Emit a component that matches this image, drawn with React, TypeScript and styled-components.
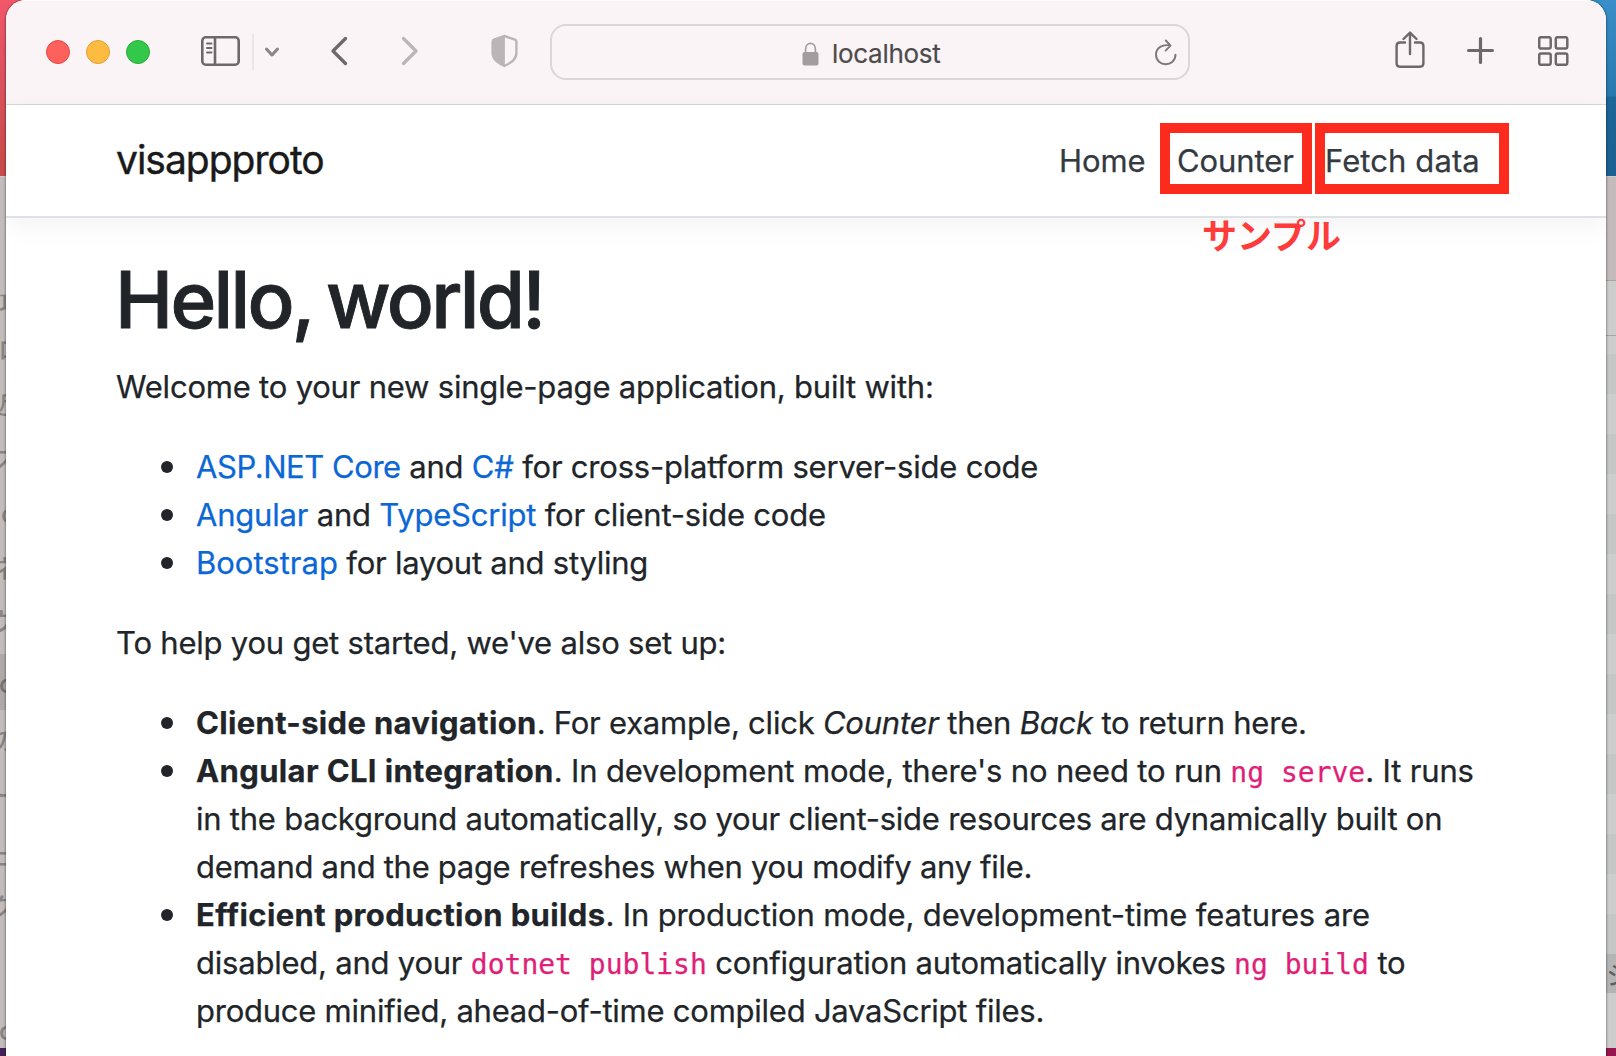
import React from 'react';
import styled, { createGlobalStyle, css } from 'styled-components';

const sans = `Inter, "Noto Sans CJK JP", sans-serif`;

const GlobalStyle = createGlobalStyle`
  *, *::before, *::after { box-sizing: border-box; }
  html, body { margin: 0; padding: 0; }
  body { font-family: ${sans}; color: #212529; overflow: hidden; }
`;

const Desktop = styled.div`
  position: relative;
  width: 1616px;
  height: 1056px;
  overflow: hidden;
  padding: 0 10px 0 6px;
`;

const Backdrop = styled.div`
  position: absolute;
  inset: 0;
  display: flex;
  justify-content: space-between;
`;

const Wallpaper = styled.div<{ $bg: string }>`
  width: 40px;
  height: 1056px;
  padding: 176px 0 8px;
  background: ${p => p.$bg};
`;

const Pane = styled.div`
  height: 872px;
  overflow: hidden;
  display: flex;
  flex-direction: column;
  background: #c2bcbb;
  border-top: 1px solid #d0cac9;
`;

const SideItem = styled.div<{ $h: number; $on?: boolean; $x?: number }>`
  flex: none;
  height: ${p => p.$h}px;
  display: flex;
  align-items: center;
  padding-left: 1px;
  text-indent: ${p => p.$x ?? -1}px;
  font: 500 25px/1 "Noto Sans CJK JP", sans-serif;
  color: ${p => (p.$on ? '#797374' : '#898384')};
  background: ${p => (p.$on ? '#b0a9a9' : 'transparent')};
`;

const Band = styled.div<{ $h: number; $bg: string; $line?: boolean }>`
  flex: none;
  height: ${p => p.$h}px;
  background: ${p => p.$bg};
  ${p => p.$line && css`border-bottom: 1px solid #a5a2a2;`}
  display: flex;
  align-items: center;
  padding-left: 30px;
  font: 400 26px/1 "Noto Sans CJK JP", sans-serif;
  color: #5e5e5e;
`;

const Window = styled.div`
  position: relative;
  width: 1600px;
  height: 1056px;
  overflow: hidden;
  display: flex;
  flex-direction: column;
  background: #fff;
  border-radius: 20px 20px 0 0;
`;

const WindowShade = styled.div`
  position: relative;
  border-radius: 20px 20px 0 0;
  box-shadow: 0 0 2px 1px rgba(0, 0, 0, 0.3);
`;

const Toolbar = styled.header`
  flex: none;
  height: 105px;
  display: flex;
  align-items: flex-start;
  background: #faf4f6;
  border-top: 1px solid #fdfbfc;
  border-bottom: 1px solid #dad6d8;
`;

const Lights = styled.div`
  display: flex;
  gap: 16px;
  margin: 39px 0 0 40px;
`;

const Light = styled.span<{ $fill: string; $edge: string }>`
  width: 24px;
  height: 24px;
  border-radius: 50%;
  background: ${p => p.$fill};
  border: 1px solid ${p => p.$edge};
`;

const Glyph = styled.svg<{ $ml?: number; $mt: number }>`
  flex: none;
  display: block;
  margin: ${p => p.$mt - 1}px 0 0 ${p => p.$ml ?? 0}px;
  fill: none;
  stroke: #6f686a;
  stroke-linecap: round;
  stroke-linejoin: round;
`;

const Divider = styled.span`
  width: 2px;
  height: 36px;
  margin: 33px 0 0 12px;
  background: #ebe5e7;
`;

const AddressBar = styled.div`
  width: 640px;
  height: 56px;
  margin: 23px 0 0 31px;
  border: 2px solid #dcd6d8;
  border-radius: 16px;
  display: flex;
  align-items: flex-start;
`;

const Host = styled.span`
  width: 110px;
  margin: 10px 0 0 13px;
  font-size: 26px;
  line-height: 36px;
  letter-spacing: -0.3px;
  color: #4d4a4b;
  -webkit-text-stroke: 0.2px currentColor;
  white-space: nowrap;
`;

const NavBar = styled.nav`
  position: relative;
  flex: none;
  height: 113px;
  display: flex;
  justify-content: space-between;
  padding: 18px 97px 0 110px;
  border-bottom: 2px solid #dee2e6;
  box-shadow: 0 8px 24px rgba(0, 0, 0, 0.05);
`;

const Brand = styled.a`
  margin-top: 7px;
  font-size: 39px;
  line-height: 60px;
  letter-spacing: -1px;
  color: #1a1a1a;
  -webkit-text-stroke: 0.4px currentColor;
`;

const NavLinks = styled.div`
  display: flex;
  gap: 3px;
`;

const NavLink = styled.a<{ $w: number; $pad: number; $boxed?: boolean; $ls?: number }>`
  width: ${p => p.$w}px;
  height: 71px;
  padding: 0 0 0 ${p => p.$pad}px;
  border: 10px solid ${p => (p.$boxed ? '#fc2b1d' : 'transparent')};
  font-size: 31px;
  line-height: 56px;
  letter-spacing: ${p => p.$ls ?? -0.1}px;
  color: #343a40;
  -webkit-text-stroke: 0.25px currentColor;
  white-space: nowrap;
`;

const Note = styled.span`
  position: absolute;
  left: 1196px;
  top: 109px;
  font: 700 35px/40px "Noto Sans CJK JP", sans-serif;
  color: #ff3b3b;
`;

const Content = styled.main`
  padding: 34px 100px 0 110px;
  -webkit-text-stroke: 0.25px currentColor;
`;

const Title = styled.h1`
  margin: 0 0 15px -1px;
  font-size: 78px;
  font-weight: 500;
  line-height: 96px;
  letter-spacing: -2.7px;
  word-spacing: -4px;
  -webkit-text-stroke: 0.9px currentColor;
`;

const Para = styled.p`
  margin: 0 0 32px;
  font-size: 31px;
  line-height: 48px;
  letter-spacing: -0.21px;
  white-space: nowrap;
`;

const List = styled.ul`
  margin: 0 0 32px;
  padding: 0 0 0 80px;
  list-style: none;
  font-size: 31px;
  line-height: 48px;
`;

const Item = styled.li`
  position: relative;
  &::before {
    content: '';
    position: absolute;
    left: -35px;
    top: 18px;
    width: 12px;
    height: 12px;
    border-radius: 50%;
    background: #212529;
  }
`;

const Line = styled.span<{ $ls?: number }>`
  display: block;
  white-space: nowrap;
  letter-spacing: ${p => p.$ls ?? -0.22}px;
`;

const Link = styled.a<{ $ls?: number }>`
  letter-spacing: ${p => p.$ls ?? -0.2}px;
  color: #0c67d6;
`;

const Code = styled.code`
  font: 28px/1 "DejaVu Sans Mono", monospace;
  letter-spacing: 0;
  color: #e01f78;
`;

const Strong = styled.strong<{ $ls?: number }>`
  font-weight: 700;
  letter-spacing: ${p => p.$ls ?? 0.37}px;
`;

const sidebar = [
  { t: '', h: 97 }, { t: '項', h: 56, x: -2 }, { t: 'ロ', h: 36, x: -3 }, { t: '近', h: 74, x: -9 },
  { t: 'ス', h: 36, x: -9 }, { t: 'o', h: 72, x: 0 }, { t: 'ネ', h: 38, x: -9 },
  { t: 'ウ', h: 68, x: -12 }, { t: 'o', h: 56, on: true, x: -2 }, { t: 'の', h: 58, x: -9 },
  { t: 'ー', h: 52, x: -4 }, { t: 'ュ', h: 68, x: -8 }, { t: 'ク', h: 34, x: -11 },
  { t: '', h: 92 }, { t: 'o', h: 30, x: -2 },
];

export default function App() {
  return (
    <>
      <GlobalStyle />
      <Desktop>
        <Backdrop>
          <Wallpaper $bg="linear-gradient(#f2576a 0, #df5360 60px, #c64b4a 176px, #46205a 176px)">
            <Pane>
              {sidebar.map((s, i) => (
                <SideItem key={i} $h={s.h} $on={s.on} $x={s.x}>{s.t}</SideItem>
              ))}
            </Pane>
          </Wallpaper>
          <Wallpaper $bg="linear-gradient(#3a8fc8 0, #2878ad 96px, #1d6698 97px, #1b6090 176px, #96174f 176px)">
            <Pane>
              <Band $h={104} $bg="#c3babb" $line />
              <Band $h={55} $bg="#cdcccc" $line />
              <Band $h={18} $bg="#cdcccc" />
              {Array.from({ length: 15 }, (_, i) => (
                <Band key={i} $h={40} $bg={i % 2 ? '#cecdcd' : '#c4c7c6'} />
              ))}
              <Band $h={39} $bg="#b5b4b4">シ</Band>
              <Band $h={56} $bg="#cecdcd" />
            </Pane>
          </Wallpaper>
        </Backdrop>

        <WindowShade>
          <Window>
            <Toolbar>
              <Lights>
                <Light $fill="#fe605c" $edge="#e24b48" />
                <Light $fill="#fdbc40" $edge="#e0a137" />
                <Light $fill="#34c84a" $edge="#2aab3b" />
              </Lights>
              <Glyph $ml={51} $mt={36} width="39" height="30" strokeWidth="2.6">
                <rect x="1.3" y="1.3" width="36.400" height="27.400" rx="3.500" />
                <path d="M14 1.500v27" />
                <path d="M6 7.500h4.500M6 12h4.500M6 16.500h4.500" strokeWidth="1.900" />
              </Glyph>
              <Divider />
              <Glyph $ml={10} $mt={46} width="16" height="12" strokeWidth="3">
                <path d="M2.500 3l5.500 6 5.500-6" stroke="#8b8487" />
              </Glyph>
              <Glyph $ml={50} $mt={36} width="18" height="30" strokeWidth="3.300">
                <path d="M15.500 2.500L3 15l12.500 12.500" />
              </Glyph>
              <Glyph $ml={53} $mt={36} width="18" height="30" strokeWidth="3.300">
                <path d="M2.500 2.500L15 15 2.500 27.500" stroke="#bbb5b7" />
              </Glyph>
              <Glyph $ml={72} $mt={34} width="28" height="34" strokeWidth="2.400">
                <path d="M13.500 2L3 5.700c-1 .4-1.400 1-1.400 2v11c0 6.500 4.500 9.500 11.900 13.300 7.400-3.800 11.900-6.800 11.900-13.300v-11c0-1-.4-1.600-1.400-2z" stroke="#bbb5b7" />
                <path d="M13.900 2L3 5.700c-1 .4-1.400 1-1.400 2v11c0 6.500 4.500 9.500 12.300 13.300z" fill="#bbb5b7" stroke="none" />
              </Glyph>
              <AddressBar>
                <Glyph $ml={250} $mt={17} width="17" height="24" strokeWidth="1.700">
                  <path d="M3.600 11V7.200c0-7.800 9.800-7.800 9.800 0V11" stroke="#a39d9f" />
                  <rect x="0.500" y="10" width="16" height="13.500" rx="2" fill="#a39d9f" stroke="none" />
                </Glyph>
                <Host>localhost</Host>
                <Glyph $ml={212} $mt={14} width="24" height="27" strokeWidth="1.900">
                  <path d="M11.800 1.500l4.700 5.100-4.900 5M16.500 6.600C8.500 4.600 2 9 2 15.600c0 12.800 19.500 12.800 19.500 0" stroke="#7d7779" />
                </Glyph>
              </AddressBar>
              <Glyph $ml={205} $mt={31} width="30" height="37" strokeWidth="2.400">
                <path d="M10 11.500H5c-2.200 0-3.400 1.200-3.400 3.400v17.400c0 2.200 1.200 3.400 3.400 3.400h20c2.200 0 3.400-1.200 3.400-3.400V14.900c0-2.200-1.200-3.400-3.400-3.400h-5" />
                <path d="M15 23V2M8.500 8L15 1.600 21.500 8" />
              </Glyph>
              <Glyph $ml={42} $mt={37} width="27" height="27" strokeWidth="3.200">
                <path d="M13.500 1.600v23.800M1.600 13.500h23.800" />
              </Glyph>
              <Glyph $ml={44} $mt={36} width="31" height="30" strokeWidth="2.500">
                <rect x="1.200" y="1.200" width="11.500" height="11.400" rx="1.800" />
                <rect x="17.800" y="1.200" width="11.500" height="11.400" rx="1.800" />
                <rect x="1.200" y="17.400" width="11.500" height="11.400" rx="1.800" />
                <rect x="17.800" y="17.400" width="11.500" height="11.400" rx="1.800" />
              </Glyph>
            </Toolbar>

            <NavBar>
              <Brand>visappproto</Brand>
              <NavLinks>
                <NavLink $w={110} $pad={2}>Home</NavLink>
                <NavLink $w={152} $pad={7} $boxed>Counter</NavLink>
                <NavLink $w={194} $pad={0} $boxed $ls={0.1}>Fetch data</NavLink>
              </NavLinks>
              <Note>サンプル</Note>
            </NavBar>

            <Content>
              <Title>Hello, world!</Title>
              <Para>Welcome to your new single-page application, built with:</Para>
              <List>
                <Item><Line><Link $ls={-0.45}>ASP.NET Core</Link> and <Link>C#</Link> for cross-platform server-side code</Line></Item>
                <Item><Line><Link>Angular</Link> and <Link>TypeScript</Link> for client-side code</Line></Item>
                <Item><Line $ls={-0.24}><Link $ls={0}>Bootstrap</Link> for layout and styling</Line></Item>
              </List>
              <Para>To help you get started, we've also set up:</Para>
              <List>
                <Item>
                  <Line><Strong $ls={0.33}>Client-side navigation</Strong>. For example, click <em>Counter</em> then <em>Back</em> to return here.</Line>
                </Item>
                <Item>
                  <Line $ls={-0.16}><Strong>Angular CLI integration</Strong>. In development mode, there's no need to run <Code>ng serve</Code>. It runs</Line>
                  <Line $ls={-0.235}>in the background automatically, so your client-side resources are dynamically built on</Line>
                  <Line $ls={-0.3}>demand and the page refreshes when you modify any file.</Line>
                </Item>
                <Item>
                  <Line $ls={-0.14}><Strong>Efficient production builds</Strong>. In production mode, development-time features are</Line>
                  <Line>disabled, and your <Code>dotnet publish</Code> configuration automatically invokes <Code>ng build</Code> to</Line>
                  <Line $ls={-0.24}>produce minified, ahead-of-time compiled JavaScript files.</Line>
                </Item>
              </List>
            </Content>
          </Window>
        </WindowShade>
      </Desktop>
    </>
  );
}
